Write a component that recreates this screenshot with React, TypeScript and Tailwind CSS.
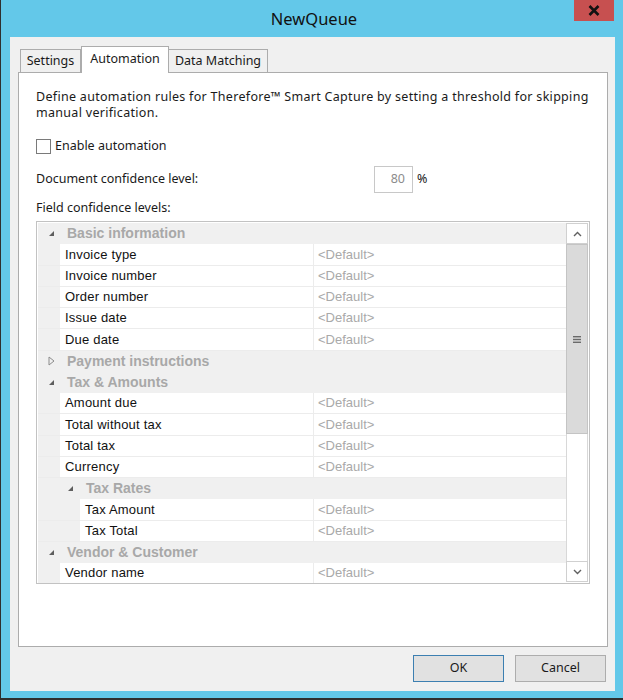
import React from "react";

type Row =
  | { kind: "group"; label: string; level: number; expanded: boolean }
  | { kind: "item"; label: string; level: number };

const rows: Row[] = [
  { kind: "group", label: "Basic information", level: 0, expanded: true },
  { kind: "item", label: "Invoice type", level: 0 },
  { kind: "item", label: "Invoice number", level: 0 },
  { kind: "item", label: "Order number", level: 0 },
  { kind: "item", label: "Issue date", level: 0 },
  { kind: "item", label: "Due date", level: 0 },
  { kind: "group", label: "Payment instructions", level: 0, expanded: false },
  { kind: "group", label: "Tax & Amounts", level: 0, expanded: true },
  { kind: "item", label: "Amount due", level: 0 },
  { kind: "item", label: "Total without tax", level: 0 },
  { kind: "item", label: "Total tax", level: 0 },
  { kind: "item", label: "Currency", level: 0 },
  { kind: "group", label: "Tax Rates", level: 1, expanded: true },
  { kind: "item", label: "Tax Amount", level: 1 },
  { kind: "item", label: "Tax Total", level: 1 },
  { kind: "group", label: "Vendor & Customer", level: 0, expanded: true },
  { kind: "item", label: "Vendor name", level: 0 },
];

function Tri({ expanded }: { expanded: boolean }) {
  return expanded ? (
    <svg width="7" height="7" viewBox="0 0 7 7">
      <polygon points="6,1 6,6 1,6" fill="#5e5e5e" />
    </svg>
  ) : (
    <svg width="7" height="10" viewBox="0 0 7 10">
      <polygon points="1,1 6,5 1,9" fill="none" stroke="#8c8c8c" strokeWidth="1" />
    </svg>
  );
}

function GridRow({ row }: { row: Row }) {
  if (row.kind === "group") {
    return (
      <div className="flex h-[21.25px] shrink-0 items-center bg-[#f0f0f0]">
        <div className={row.level === 0 ? "w-[10px] shrink-0" : "w-[29px] shrink-0"} />
        <div className="flex w-[19px] shrink-0 items-center">
          <Tri expanded={row.expanded} />
        </div>
        <span className="whitespace-nowrap text-[14px] font-bold text-[#a8a8a8]">{row.label}</span>
      </div>
    );
  }
  return (
    <div className="flex h-[21.25px] shrink-0 border-b border-[#ececec] bg-[#f0f0f0]">
      <div className={row.level === 0 ? "w-[22px] shrink-0" : "w-[42px] shrink-0"} />
      <div
        className={
          (row.level === 0 ? "w-[254px]" : "w-[234px]") +
          " flex shrink-0 items-center border-r border-[#ececec] bg-white pl-[5px] text-[13px] tracking-[0.2px] text-[#111]"
        }
      >
        <span className="whitespace-nowrap">{row.label}</span>
      </div>
      <div className="flex flex-1 items-center bg-white pl-[4px] text-[13px] text-[#a9a9a9]">
        &lt;Default&gt;
      </div>
    </div>
  );
}

function Scrollbar() {
  return (
    <div className="flex w-[22px] shrink-0 flex-col">
      <div className="flex h-[21px] items-center justify-center border border-[#d0d0d0] bg-white">
        <svg width="9" height="6" viewBox="0 0 9 6">
          <polyline points="1,5 4.5,1.5 8,5" fill="none" stroke="#606060" strokeWidth="1.4" />
        </svg>
      </div>
      <div className="flex h-[190px] items-center justify-center border border-[#c4c4c4] bg-[#dadada]">
        <svg width="8" height="7" viewBox="0 0 8 7">
          <rect x="0" y="0" width="8" height="1.4" fill="#6a6a6a" />
          <rect x="0" y="2.8" width="8" height="1.4" fill="#6a6a6a" />
          <rect x="0" y="5.6" width="8" height="1.4" fill="#6a6a6a" />
        </svg>
      </div>
      <div className="flex-1 border-x border-[#d8d8d8] bg-white" />
      <div className="flex h-[21px] items-center justify-center border border-[#d0d0d0] bg-white">
        <svg width="9" height="6" viewBox="0 0 9 6">
          <polyline points="1,1 4.5,4.5 8,1" fill="none" stroke="#606060" strokeWidth="1.4" />
        </svg>
      </div>
    </div>
  );
}

export default function App() {
  return (
    <div className="flex h-[700px] w-[623px] flex-col border-b-2 border-l border-[#2f2f2f] bg-[#63c8e9] font-['Noto_Sans',sans-serif] text-[12.5px] text-[#1a1a1a]">
      {/* Title bar */}
      <div className="grid h-[37px] shrink-0 grid-cols-[1fr_auto_1fr]">
        <div />
        <div className="flex items-center pl-[4px] pt-[2px] text-[16.5px] text-[#111]">NewQueue</div>
        <div className="flex justify-end pr-[9px]">
          <div className="flex h-[21px] w-[40px] items-center justify-center bg-[#c75050]">
            <svg width="12" height="11" viewBox="0 0 12 11">
              <path d="M1.5 1 L10.5 10 M10.5 1 L1.5 10" stroke="#111" strokeWidth="2.6" />
            </svg>
          </div>
        </div>
      </div>

      {/* Client area */}
      <div className="ml-[9px] mr-[8px] mb-[7px] flex flex-1 flex-col bg-[#f0f0f0] pt-[9px] pb-[9px]">
        {/* Tabs */}
        <div className="ml-[10px] flex h-[26px] items-end">
          <div className="flex h-[23px] w-[61px] items-center justify-center border-x border-t border-[#acacac] bg-[#f0f0f0] pt-[1px]">
            Settings
          </div>
          <div className="relative z-10 -mb-px flex h-[27px] w-[88px] items-start justify-center border-x border-t border-[#acacac] bg-white pt-[3px]">
            Automation
          </div>
          <div className="flex h-[23px] w-[99px] items-center justify-center border-r border-t border-[#acacac] bg-[#f0f0f0] pt-[1px]">
            Data Matching
          </div>
        </div>

        {/* Panel */}
        <div className="ml-[8px] flex h-[575px] w-[590px] flex-col border border-[#acacac] bg-white pl-[17px] pt-[16px]">
          <div className="whitespace-nowrap leading-[16px] tracking-[0.3px]">
            Define automation rules for Therefore™ Smart Capture by setting a threshold for skipping
            <br />
            manual verification.
          </div>

          <div className="mt-[17px] flex h-[16px] items-center">
            <div className="h-[15px] w-[15px] border border-[#7a7a7a] bg-white" />
            <span className="ml-[4px]">Enable automation</span>
          </div>

          <div className="mt-[12px] flex h-[27px] items-center">
            <span className="w-[338px]">Document confidence level:</span>
            <div className="flex h-[27px] w-[39px] items-center justify-end border border-[#c8c8c8] bg-white pr-[7px] text-[#8c8c8c]">
              80
            </div>
            <span className="ml-[4px]">%</span>
          </div>

          <div className="mt-[7px] leading-[16px]">Field confidence levels:</div>

          <div className="mt-[5px] flex h-[363px] w-[554px] border border-[#c2c2c2] bg-white px-px pt-px font-['Liberation_Sans',sans-serif]">
            <div className="flex flex-1 flex-col overflow-hidden">
              {rows.map((r, i) => (
                <GridRow key={i} row={r} />
              ))}
            </div>
            <div className="flex pb-px">
              <Scrollbar />
            </div>
          </div>
        </div>

        {/* Buttons */}
        <div className="mt-[8px] flex justify-end gap-[11px] pr-[9px]">
          <div className="flex h-[27px] w-[91px] items-center justify-center border border-[#3c7fb1] bg-[#e1e1e1]">
            OK
          </div>
          <div className="flex h-[27px] w-[91px] items-center justify-center border border-[#adadad] bg-[#e1e1e1]">
            Cancel
          </div>
        </div>
      </div>
    </div>
  );
}
